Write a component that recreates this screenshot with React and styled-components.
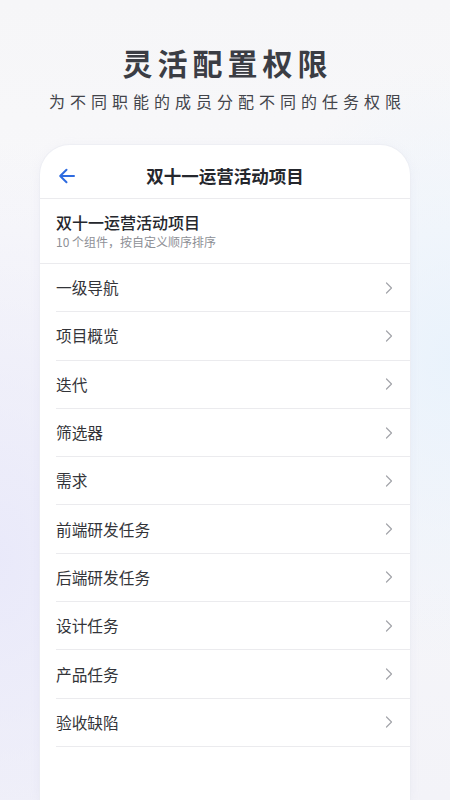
import React from "react";
import styled, { createGlobalStyle } from "styled-components";

const Global = createGlobalStyle`
  html, body { margin: 0; padding: 0; }
  body {
    width: 450px;
    height: 800px;
    overflow: hidden;
    font-family: "Noto Sans CJK SC", "Noto Sans", sans-serif;
  }
`;

const Page = styled.div`
  width: 450px;
  height: 800px;
  box-sizing: border-box;
  overflow: hidden;
  display: flex;
  flex-direction: column;
  align-items: center;
  background:
    radial-gradient(ellipse 260px 420px at 0% 70%, rgba(232, 232, 250, 0.9), rgba(232, 232, 250, 0) 100%),
    radial-gradient(ellipse 200px 300px at 100% 45%, rgba(232, 242, 252, 0.9), rgba(232, 242, 252, 0) 100%),
    linear-gradient(180deg, #f6f6f8 0%, #f8f8fa 30%, #f3f3f8 100%);
`;

const Heading = styled.h1`
  margin: 40px 0 0;
  font-size: 30px;
  line-height: 44px;
  font-weight: 700;
  color: #3b3d44;
  letter-spacing: 5px;
  padding-left: 5px;
`;

const Sub = styled.p`
  margin: 5px 0 0;
  font-size: 16px;
  line-height: 24px;
  color: #43454b;
  letter-spacing: 5px;
  padding-left: 5px;
`;

const Card = styled.div`
  margin-top: 32px;
  width: 370px;
  flex: 1;
  background: #fff;
  border-radius: 30px 30px 0 0;
  box-shadow: 0 0 0 1px rgba(235, 236, 242, 0.7), 0 2px 12px rgba(180, 185, 210, 0.12);
  display: flex;
  flex-direction: column;
`;

const Header = styled.div`
  height: 54px;
  box-sizing: border-box;
  padding-top: 7px;
  position: relative;
  display: flex;
  align-items: center;
  justify-content: center;
  border-bottom: 1px solid #ebebee;
`;

const Back = styled.div`
  position: absolute;
  left: 17px;
  top: 21px;
  width: 20px;
  height: 20px;
  display: flex;
`;

const Title = styled.div`
  font-size: 17.5px;
  font-weight: 700;
  color: #25272d;
`;

const Section = styled.div`
  height: 65px;
  box-sizing: border-box;
  padding: 12px 16px 0;
  border-bottom: 1px solid #ebebee;
`;

const SectionTitle = styled.div`
  font-size: 16px;
  line-height: 22px;
  font-weight: 500;
  color: #25272d;
`;

const SectionSub = styled.div`
  font-size: 12px;
  line-height: 17px;
  color: #8e9096;
`;

const List = styled.div`
  padding-left: 16px;
  display: flex;
  flex-direction: column;
`;

const Row = styled.div`
  height: 48.3px;
  box-sizing: border-box;
  border-bottom: 1px solid #ebebee;
  display: flex;
  align-items: center;
  justify-content: space-between;
  padding-right: 16px;
`;

const RowLabel = styled.span`
  font-size: 15.7px;
  color: #333439;
`;

const Chevron = () => (
  <svg width="10" height="14" viewBox="0 0 10 14">
    <path d="M2.5 2 L7.5 7 L2.5 12" fill="none" stroke="#a3a5aa" strokeWidth="1.2" strokeLinecap="round" strokeLinejoin="round" />
  </svg>
);

const ArrowLeft = () => (
  <svg width="20" height="20" viewBox="0 0 20 20">
    <path d="M17 10 H3.5 M9.5 3.8 L3.2 10 L9.5 16.2" fill="none" stroke="#2e6be0" strokeWidth="2" strokeLinecap="round" strokeLinejoin="round" />
  </svg>
);

const items = [
  "一级导航",
  "项目概览",
  "迭代",
  "筛选器",
  "需求",
  "前端研发任务",
  "后端研发任务",
  "设计任务",
  "产品任务",
  "验收缺陷",
];

export default function App() {
  return (
    <>
      <Global />
      <Page>
        <Heading>灵活配置权限</Heading>
        <Sub>为不同职能的成员分配不同的任务权限</Sub>
        <Card>
          <Header>
            <Back>
              <ArrowLeft />
            </Back>
            <Title>双十一运营活动项目</Title>
          </Header>
          <Section>
            <SectionTitle>双十一运营活动项目</SectionTitle>
            <SectionSub>10 个组件，按自定义顺序排序</SectionSub>
          </Section>
          <List>
            {items.map((t) => (
              <Row key={t}>
                <RowLabel>{t}</RowLabel>
                <Chevron />
              </Row>
            ))}
          </List>
        </Card>
      </Page>
    </>
  );
}
